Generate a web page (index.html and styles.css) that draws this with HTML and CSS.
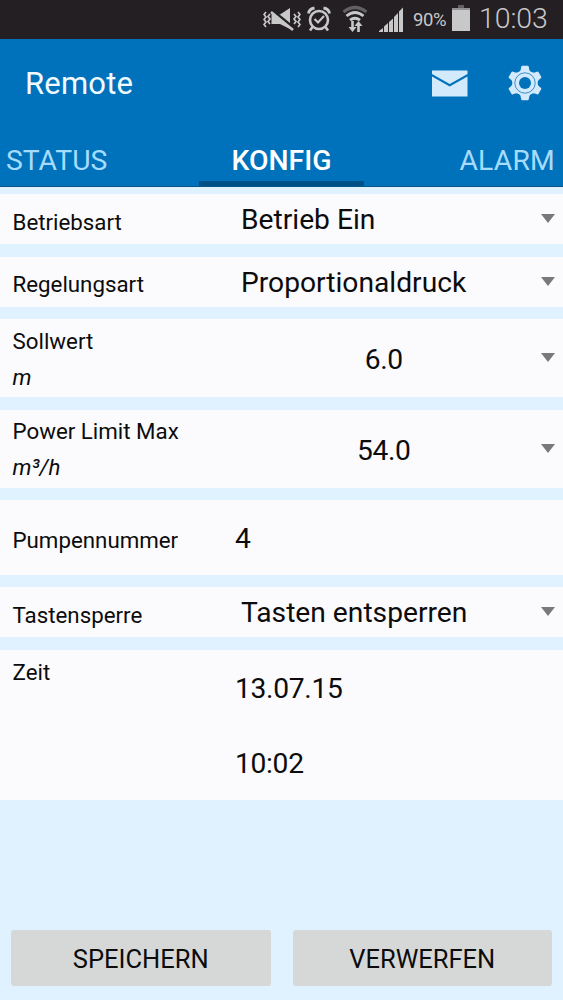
FILE: index.html
```html
<!doctype html>
<html lang="de">
    <head>
        <meta charset="UTF-8">
        <meta name="viewport" content="width=device-width, initial-scale=1.0">
        <title>Remote</title>
        <link rel="stylesheet" href="styles.css">
    </head>
    <body>
        <!-- Statusleiste -->
        <div class="statusbar">
            <svg class="icon-mute" width="38" height="26" viewBox="0 0 38 26">
                <path d="M3 5l-2 2.500L3 10l-2 2.500L3 15l-2 2.500 2 2.500M7 7L5 9.500 7 12 5 14.500 7 17M31 7l2 2.500-2 2.500 2 2.500-2 2.500M35 5l2 2.500-2 2.500 2 2.500-2 2.500 2 2.500-2 2.500" fill="none" stroke="#c8c8c8" stroke-width="1.700"/>
                <path d="M8.500 7.500H17L27 1v21l-10-5H8.500z" fill="#c8c8c8"/>
                <path d="M8 3L30 21" stroke="#231f23" stroke-width="4"/>
                <path d="M8 5L30 23" stroke="#c8c8c8" stroke-width="2.600"/>
            </svg>
            <svg class="icon-clock" width="24" height="26" viewBox="0 0 24 26">
                <circle cx="12" cy="14" r="9" fill="none" stroke="#c8c8c8" stroke-width="2.600"/>
                <path d="M7.500 13l3.500 3.500 6-6.500" fill="none" stroke="#c8c8c8" stroke-width="2.200"/>
                <path d="M1.500 7.500Q2 3 7.500 2M22.500 7.500Q22 3 16.500 2" fill="none" stroke="#c8c8c8" stroke-width="2.800"/>
                <path d="M5.500 21L3 24.500M18.500 21l2.500 3.500" stroke="#c8c8c8" stroke-width="2.600"/>
            </svg>
            <svg class="icon-wifi" width="26" height="28" viewBox="0 0 26 28">
                <path d="M1.500 7Q13-2 24.500 7" fill="none" stroke="#626064" stroke-width="3.200"/>
                <path d="M4.500 11Q13 4 21.500 11M8 15.200q5-4 10 0" fill="none" stroke="#c8c8c8" stroke-width="2.800"/>
                <path d="M10.500 16v8M16.500 27v-8" stroke="#c8c8c8" stroke-width="2.600"/>
                <path d="M6.500 22h8l-4 5zM12.500 21h8l-4-5z" fill="#c8c8c8"/>
            </svg>
            <svg class="icon-signal" width="25" height="25" viewBox="0 0 25 25">
                <path d="M0 25v-1l4-3v4zM5 25v-5.500l4-3.500v9zM10 25V15l4-3.500V25zM15 25V10l4-4v19zM20 25V4.500l4-4V25z" fill="#c8c8c8"/>
            </svg>
            <span class="battery-text">90%</span>
            <svg class="icon-battery" width="18" height="26" viewBox="0 0 18 26">
                <path d="M6 0h6v3H6z" fill="#626064"/>
                <path d="M0 3h18v23H0z" fill="#c8c8c8"/>
                <path d="M0 3h18v2H0z" fill="#929094"/>
            </svg>
            <span class="time">10:03</span>
        </div>

        <!-- Kopfbereich mit Tabs -->
        <div class="header">
            <div class="title-bar">
                <h1 class="title">Remote</h1>
                <svg class="icon-mail" width="36" height="27" viewBox="0 0 36 27">
                    <path d="M0 0.500h35.500v3.500L17.700 14 0 4z" fill="#d3eafc"/>
                    <path d="M0 6.500l17.700 10 17.800-10V26.500H0z" fill="#d3eafc"/>
                </svg>
                <svg class="icon-gear" width="34" height="36" viewBox="-17 -18 34 36">
                    <g fill="#d3eafc">
                        <circle r="12.800"/>
                        <path id="tooth" d="M-5.500-11Q-4-13-3.800-16q.1-1.200 1.200-1.200h5.200q1.100 0 1.200 1.200Q4-13 5.500-11z"/>
                        <use href="#tooth" transform="rotate(60)"/>
                        <use href="#tooth" transform="rotate(120)"/>
                        <use href="#tooth" transform="rotate(180)"/>
                        <use href="#tooth" transform="rotate(240)"/>
                        <use href="#tooth" transform="rotate(300)"/>
                    </g>
                    <circle r="10.200" fill="none" stroke="#2c86c5" stroke-width="0.900"/>
                    <circle r="6" fill="#0072bc"/>
                </svg>
            </div>
            <div class="tabs">
                <div class="tab tab-left">STATUS</div>
                <div class="tab active">KONFIG</div>
                <div class="tab tab-right">ALARM</div>
            </div>
        </div>

        <!-- Einstellungen -->
        <div class="settings">
            <div class="row">
                <div class="label">Betriebsart</div>
                <div class="value">Betrieb Ein</div>
                <div class="arrow"></div>
            </div>
            <div class="row">
                <div class="label">Regelungsart</div>
                <div class="value">Proportionaldruck</div>
                <div class="arrow"></div>
            </div>
            <div class="row double">
                <div class="label">Sollwert<br><i>m</i></div>
                <div class="value">6.0</div>
                <div class="arrow"></div>
            </div>
            <div class="row double">
                <div class="label">Power Limit Max<br><i>m³/h</i></div>
                <div class="value">54.0</div>
                <div class="arrow"></div>
            </div>
            <div class="row input">
                <div class="label">Pumpennummer</div>
                <div class="value">4</div>
            </div>
            <div class="row">
                <div class="label">Tastensperre</div>
                <div class="value">Tasten entsperren</div>
                <div class="arrow"></div>
            </div>
            <div class="row clock">
                <div class="label">Zeit</div>
                <div class="value">
                    <div>13.07.15</div>
                    <div>10:02</div>
                </div>
            </div>
        </div>

        <div class="buttons">
            <button class="btn">SPEICHERN</button>
            <button class="btn">VERWERFEN</button>
        </div>
    </body>
</html>
```
FILE: styles.css
```css
:root {
    --blue-color: #0072bc;
    --dark-blue-color: #004f87;
    --background-color: #e0f2ff;
    --row-color: #fbfafd;
    --status-color: #231f23;
    --icon-color: #c8c8c8;
}
* {
    box-sizing: border-box;
}
body {
    display: flex;
    flex-direction: column;
    height: 1000px;
    margin: 0;
    overflow: hidden;
    font-family: Roboto, "Liberation Sans", sans-serif;
    color: #0c0c0c;
    background-color: var(--background-color);
}

/* Statusleiste */
.statusbar {
    display: flex;
    flex: none;
    align-items: flex-start;
    height: 39px;
    padding-left: 263px;
    background-color: var(--status-color);
    color: var(--icon-color);
}
.icon-mute {
    margin-top: 7px;
}
.icon-clock {
    margin: 6px 0 0 6px;
}
.icon-wifi {
    margin: 5px 0 0 11px;
}
.icon-signal {
    margin: 7px 0 0 11px;
}
.battery-text {
    width: 34px;
    margin: 9px 0 0 9px;
    font-size: 18.5px;
    line-height: 22px;
    letter-spacing: -0.4px;
}
.icon-battery {
    margin: 5px 0 0 5px;
}
.time {
    margin: 2px 0 0 9px;
    font-size: 28.5px;
    font-weight: 300;
    line-height: 34px;
    letter-spacing: -0.1px;
}

/* Kopfbereich */
.header {
    flex: none;
    height: 148px;
    background-color: var(--blue-color);
    border-bottom: 1px solid #075487;
}
.title-bar {
    display: flex;
    align-items: center;
    height: 88px;
    padding: 0 21px 0 25px;
}
.title {
    flex: 1;
    margin: 1px 0 0;
    font-size: 31px;
    font-weight: 400;
    letter-spacing: 0.2px;
    color: #f0faff;
}
.icon-gear {
    margin-left: 40px;
}
.tabs {
    display: flex;
    justify-content: space-between;
    height: 59px;
}
.tab {
    width: 199px;
    font-size: 28.3px;
    line-height: 68px;
    color: #a5dcfc;
}
.tab-left {
    padding-left: 6px;
}
.tab-right {
    padding-right: 8px;
    text-align: right;
    letter-spacing: 0.2px;
}
.tab.active {
    width: 165px;
    font-weight: 500;
    text-align: center;
    color: #fff;
    border-bottom: 5px solid var(--dark-blue-color);
}

/* Einstellungen */
.settings {
    display: flex;
    flex: none;
    flex-direction: column;
    gap: 12.5px;
    margin-top: 7px;
}
.row {
    display: flex;
    height: 50px;
    padding: 0 8.5px 0 12px;
    background-color: var(--row-color);
}
.label {
    flex: none;
    width: 229px;
    padding: 9.5px 0 0 0.5px;
    font-size: 22.3px;
    line-height: 36px;
}
.value {
    flex: 1;
    padding-top: 9.4px;
    font-size: 28.2px;
    line-height: 34px;
    white-space: nowrap;
}
.arrow {
    flex: none;
    align-self: flex-start;
    margin-top: 20px;
    border: 7.5px solid transparent;
    border-top: 9px solid #79787a;
    border-bottom: 0;
}
.double {
    height: 78px;
}
.double .label {
    padding-top: 3.5px;
}
.double .value {
    padding: 24px 14px 0 0;
    text-align: center;
    letter-spacing: -0.4px;
}
.double .arrow {
    margin-top: 34px;
}
.input {
    height: 75px;
    margin-top: -0.5px;
}
.input .label {
    width: 223px;
    padding-top: 22.5px;
}
.input .value {
    padding-top: 22.5px;
}
.clock {
    height: 150px;
}
.clock .label {
    width: 223px;
    padding-top: 4px;
}
.clock .value {
    padding-top: 1.5px;
    line-height: 75px;
    letter-spacing: -0.3px;
}

/* Schaltflächen */
.buttons {
    display: flex;
    gap: 22px;
    margin-top: auto;
    padding: 0 11px 14px;
}
.btn {
    flex: 1;
    height: 56px;
    padding: 1px 0 0;
    border: 0;
    border-radius: 3px;
    background-color: #d6d8d8;
    font-family: inherit;
    font-size: 25.5px;
    color: #0c0c0c;
}
```
